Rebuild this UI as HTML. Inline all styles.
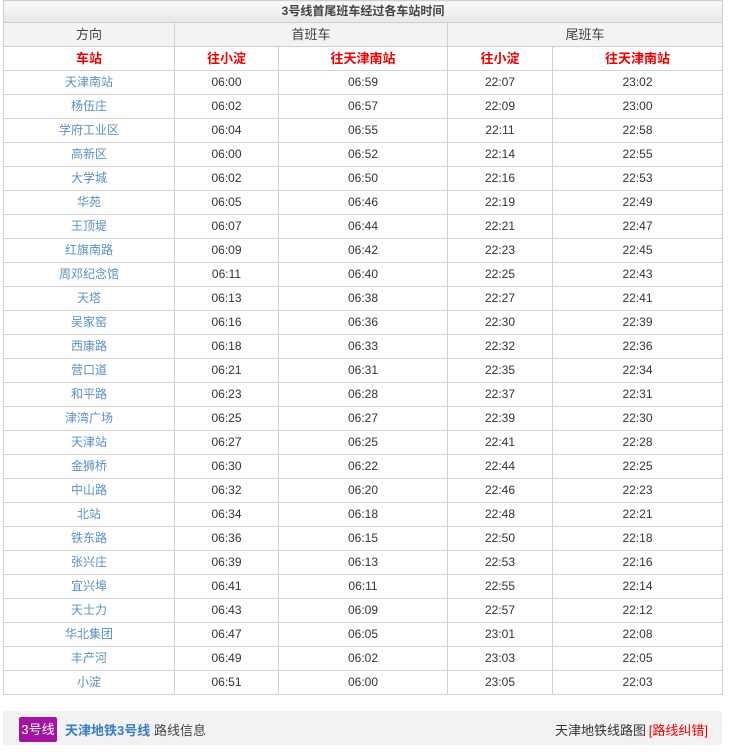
<!DOCTYPE html><html><head><meta charset="utf-8"><style>
body{margin:0;background:#fff;font-family:"Liberation Sans","Noto Sans CJK SC",sans-serif;font-size:12px;color:#333}
table{position:absolute;left:3px;top:0;border-collapse:collapse;width:719px;table-layout:fixed}
td{border:1px solid #d0d0d0;height:23px;padding:0;text-align:center;line-height:23px}
tr.t td{background:linear-gradient(#fafafa,#e6e6e6);font-weight:bold;color:#444;height:21px;line-height:21px}
tr.h td{background:#f3f3f3;font-size:13px;color:#444}
tr.s td{color:#e00;font-weight:bold;font-size:13px}
td.st{color:#5a8fc0}
.bar{position:absolute;left:3px;top:711px;width:719px;height:34px;background:#f2f2f2}
.badge{position:absolute;left:16px;top:6px;width:38px;height:25px;background:#a2139f;color:#fff;border-radius:2px;font-size:13px;line-height:25px;text-align:center}
</style></head><body>
<table>
<col style="width:171px"><col style="width:104px"><col style="width:169px"><col style="width:105px"><col style="width:170px">
<tr class="t"><td colspan="5">3号线首尾班车经过各车站时间</td></tr>
<tr class="h"><td>方向</td><td colspan="2">首班车</td><td colspan="2">尾班车</td></tr>
<tr class="s"><td>车站</td><td>往小淀</td><td>往天津南站</td><td>往小淀</td><td>往天津南站</td></tr>
<tr><td class="st">天津南站</td><td>06:00</td><td>06:59</td><td>22:07</td><td>23:02</td></tr>
<tr><td class="st">杨伍庄</td><td>06:02</td><td>06:57</td><td>22:09</td><td>23:00</td></tr>
<tr><td class="st">学府工业区</td><td>06:04</td><td>06:55</td><td>22:11</td><td>22:58</td></tr>
<tr><td class="st">高新区</td><td>06:00</td><td>06:52</td><td>22:14</td><td>22:55</td></tr>
<tr><td class="st">大学城</td><td>06:02</td><td>06:50</td><td>22:16</td><td>22:53</td></tr>
<tr><td class="st">华苑</td><td>06:05</td><td>06:46</td><td>22:19</td><td>22:49</td></tr>
<tr><td class="st">王顶堤</td><td>06:07</td><td>06:44</td><td>22:21</td><td>22:47</td></tr>
<tr><td class="st">红旗南路</td><td>06:09</td><td>06:42</td><td>22:23</td><td>22:45</td></tr>
<tr><td class="st">周邓纪念馆</td><td>06:11</td><td>06:40</td><td>22:25</td><td>22:43</td></tr>
<tr><td class="st">天塔</td><td>06:13</td><td>06:38</td><td>22:27</td><td>22:41</td></tr>
<tr><td class="st">吴家窑</td><td>06:16</td><td>06:36</td><td>22:30</td><td>22:39</td></tr>
<tr><td class="st">西康路</td><td>06:18</td><td>06:33</td><td>22:32</td><td>22:36</td></tr>
<tr><td class="st">营口道</td><td>06:21</td><td>06:31</td><td>22:35</td><td>22:34</td></tr>
<tr><td class="st">和平路</td><td>06:23</td><td>06:28</td><td>22:37</td><td>22:31</td></tr>
<tr><td class="st">津湾广场</td><td>06:25</td><td>06:27</td><td>22:39</td><td>22:30</td></tr>
<tr><td class="st">天津站</td><td>06:27</td><td>06:25</td><td>22:41</td><td>22:28</td></tr>
<tr><td class="st">金狮桥</td><td>06:30</td><td>06:22</td><td>22:44</td><td>22:25</td></tr>
<tr><td class="st">中山路</td><td>06:32</td><td>06:20</td><td>22:46</td><td>22:23</td></tr>
<tr><td class="st">北站</td><td>06:34</td><td>06:18</td><td>22:48</td><td>22:21</td></tr>
<tr><td class="st">铁东路</td><td>06:36</td><td>06:15</td><td>22:50</td><td>22:18</td></tr>
<tr><td class="st">张兴庄</td><td>06:39</td><td>06:13</td><td>22:53</td><td>22:16</td></tr>
<tr><td class="st">宜兴埠</td><td>06:41</td><td>06:11</td><td>22:55</td><td>22:14</td></tr>
<tr><td class="st">天士力</td><td>06:43</td><td>06:09</td><td>22:57</td><td>22:12</td></tr>
<tr><td class="st">华北集团</td><td>06:47</td><td>06:05</td><td>23:01</td><td>22:08</td></tr>
<tr><td class="st">丰产河</td><td>06:49</td><td>06:02</td><td>23:03</td><td>22:05</td></tr>
<tr><td class="st">小淀</td><td>06:51</td><td>06:00</td><td>23:05</td><td>22:03</td></tr>
</table>
<div class="bar"><div class="badge">3号线</div>
<span style="position:absolute;left:62px;top:9px;color:#3a7cc4;font-weight:bold;font-size:13px">天津地铁3号线</span>
<span style="position:absolute;left:151px;top:9px;font-size:13px;color:#444">路线信息</span>
<span style="position:absolute;right:76px;top:9px;font-size:13px;color:#333">天津地铁线路图</span>
<span style="position:absolute;right:14px;top:9px;font-size:13px;color:#e00">[路线纠错]</span>
</div>
</body></html>
